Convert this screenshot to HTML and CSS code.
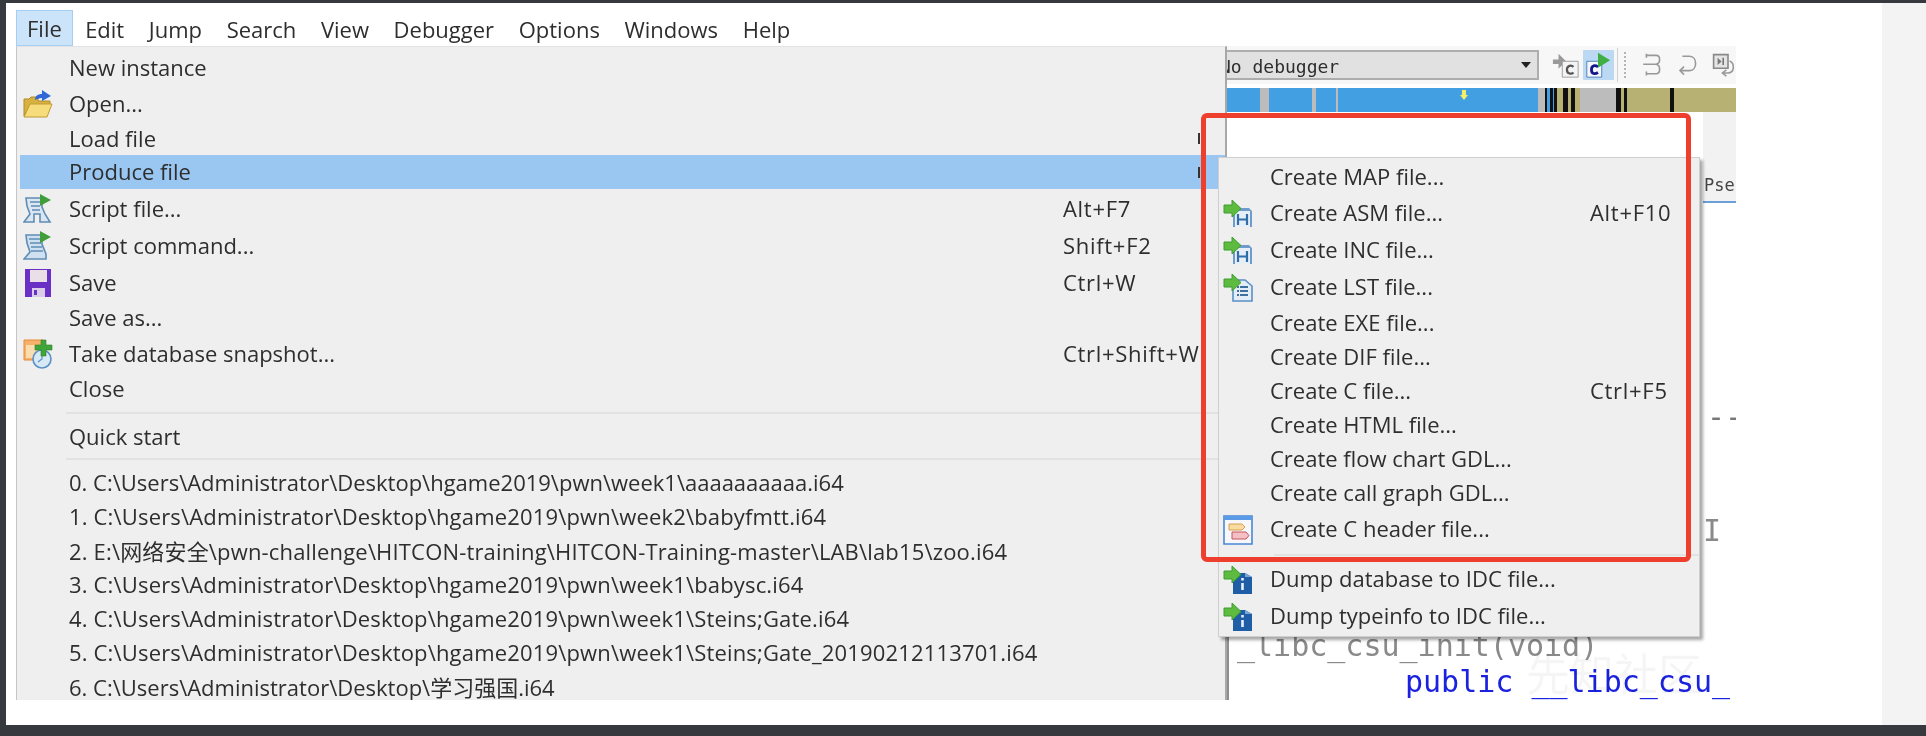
FILE: index.html
```html
<!DOCTYPE html>
<html lang="en">
  <head>
    <meta charset="UTF-8" />
    <title>IDA File menu</title>
    <link rel="stylesheet" href="styles.css">
  </head>
  <body>
    <svg class="defs" width="0" height="0">
      <symbol id="i-arrow" viewBox="0 0 30 30">
        <path d="M9 1 L18 9.5 L9 18 V14 H1 V6 H9 Z" fill="#5dbb3f" stroke="#3f9c33" stroke-width="1"/>
      </symbol>
      <symbol id="i-open" viewBox="0 0 30 30">
        <path d="M1 27 V10 H6 L8 8 H15 V12 H27 V16 H7 Z" fill="#d8b13f" stroke="#b08a2a"/>
        <path d="M1 28 L7 15 H29 L24 28 Z" fill="#f6dc7a" stroke="#c19a32"/>
        <path d="M12 11 C12 7 15 5 19 5 V1 L28 7 L19 12 V9 C16 9 14 10 12 11 Z" fill="#2f67d8"/>
      </symbol>
      <symbol id="i-script-file" viewBox="0 0 30 30">
        <path d="M3 4 H19 V13 L22 20 L27 28 H17 V20 H11 V28 H1 L7 20 L4 12 Z" fill="#dbe6f2" stroke="#5f8db5" stroke-width="1.6"/>
        <path d="M7 8 H17 M8 12 H17 M9 16 H17" stroke="#5f8db5" stroke-width="1.4"/>
        <path d="M17 0 L28 6 L17 12 Z" fill="#3f9e3a"/>
      </symbol>
      <symbol id="i-script-cmd" viewBox="0 0 30 30">
        <path d="M3 4 H19 V13 L23 23 V28 H1 L7 21 L4 12 Z" fill="#cfe0f0" stroke="#5f8db5" stroke-width="1.6"/>
        <path d="M6 8 H17 M7 12 H18 M8 16 H19 M8 20 H20" stroke="#5f8db5" stroke-width="1.4"/>
        <path d="M17 0 L28 6 L17 12 Z" fill="#3f9e3a"/>
      </symbol>
      <symbol id="i-save" viewBox="0 0 30 30">
        <path d="M2 1 H28 V29 H2 Z" fill="#6a2fc4"/>
        <path d="M7 2 H24 V14 H7 Z" fill="#eadfe6"/>
        <path d="M9 20 H22 V29 H9 Z" fill="#d9cdea"/>
        <path d="M11 22 H14 V27 H11 Z" fill="#6a2fc4"/>
      </symbol>
      <symbol id="i-snapshot" viewBox="0 0 30 30">
        <path d="M1 1 H20 V21 H1 Z" fill="#f6b26b" stroke="#e58a3a"/>
        <path d="M3 6 H18 V19 H3 Z" fill="#fbdcae"/>
        <circle cx="19" cy="20" r="9" fill="#d8e9f6" stroke="#5a90c4" stroke-width="1.6"/>
        <path d="M19 15 V20 L15 23" stroke="#5a90c4" stroke-width="1.2" fill="none"/>
        <path d="M18 1 H23 V6 H29 V11 H23 V17 H18 V11 H12 V6 H18 Z" fill="#3fa53a" stroke="#2c7f2a" stroke-width=".6"/>
      </symbol>
      <symbol id="i-asm" viewBox="0 0 30 30">
        <path d="M10 9 H26 L29 12 V28 H27 V12 H12 V28 H10 Z" fill="#6f9ccd"/>
        <path d="M12 12 H27 V28 H12 Z" fill="#e6eef7"/>
        <path d="M15 15 V26 M24 15 V26 M15 20.5 H24" stroke="#2f6ea8" stroke-width="2.2" fill="none"/>
        <use href="#i-arrow" width="30" height="30"/>
      </symbol>
      <symbol id="i-lst" viewBox="0 0 30 30">
        <path d="M10 7 H22 L29 13 V28 H10 Z" fill="#e3edf7" stroke="#5b8fc6" stroke-width="1.6"/>
        <path d="M14 14 H25 M14 18 H25 M14 22 H25" stroke="#3f6f9f" stroke-width="1.8" stroke-dasharray="2 1 8 0"/>
        <use href="#i-arrow" width="30" height="30"/>
      </symbol>
      <symbol id="i-header" viewBox="0 0 30 30">
        <path d="M1 1 H29 V29 H1 Z" fill="#f5f7fb" stroke="#4a86d8" stroke-width="1.6"/>
        <path d="M1 1 H29 V5 H1 Z" fill="#5b9ae6"/>
        <path d="M6 9 H19 L22 12 L19 15 H6 Z" fill="#f7dba0" stroke="#d8a050"/>
        <path d="M9 17 H23 L26 20.5 L23 24 H9 Z" fill="#f3c0c6" stroke="#c8545f"/>
      </symbol>
      <symbol id="i-dump" viewBox="0 0 30 30">
        <path d="M10 8 H22 L29 12 V29 H10 Z" fill="#1f5ea6"/>
        <path d="M22 8 L29 12 H22 Z" fill="#7aa6d4"/>
        <path d="M19.5 13 V15.5 M19.5 18 V25" stroke="#e8f0fa" stroke-width="2.6"/>
        <use href="#i-arrow" width="30" height="30"/>
      </symbol>
    </svg>

    <div class="screen">
      <div class="shot">
        <div class="menubar">
          <span class="menubar-item menubar-active">File</span>
          <span class="menubar-item">Edit</span>
          <span class="menubar-item">Jump</span>
          <span class="menubar-item">Search</span>
          <span class="menubar-item">View</span>
          <span class="menubar-item">Debugger</span>
          <span class="menubar-item">Options</span>
          <span class="menubar-item">Windows</span>
          <span class="menubar-item">Help</span>
        </div>

        <div class="workspace">
          <div class="menu">
            <div class="item"><span class="slot"></span><span class="label">New instance</span></div>
            <div class="item item-tall"><span class="slot"><svg class="icon"><use href="#i-open"/></svg></span><span class="label">Open...</span></div>
            <div class="item item-short"><span class="slot"></span><span class="label">Load file</span><span class="tick"></span></div>
            <div class="item item-current"><span class="slot"></span><span class="label">Produce file</span><span class="tick"></span></div>
            <div class="item item-tall"><span class="slot"><svg class="icon"><use href="#i-script-file"/></svg></span><span class="label">Script file...</span><span class="keys">Alt+F7</span></div>
            <div class="item item-tall"><span class="slot"><svg class="icon"><use href="#i-script-cmd"/></svg></span><span class="label">Script command...</span><span class="keys">Shift+F2</span></div>
            <div class="item item-tall"><span class="slot"><svg class="icon"><use href="#i-save"/></svg></span><span class="label">Save</span><span class="keys">Ctrl+W</span></div>
            <div class="item"><span class="slot"></span><span class="label">Save as...</span></div>
            <div class="item item-tall"><span class="slot"><svg class="icon"><use href="#i-snapshot"/></svg></span><span class="label">Take database snapshot...</span><span class="keys">Ctrl+Shift+W</span></div>
            <div class="item"><span class="slot"></span><span class="label">Close</span></div>
            <div class="sep sep-a"></div>
            <div class="item"><span class="slot"></span><span class="label">Quick start</span></div>
            <div class="sep sep-b"></div>
            <div class="item"><span class="slot"></span><span class="label">0. C:\Users\Administrator\Desktop\hgame2019\pwn\week1\aaaaaaaaaa.i64</span></div>
            <div class="item"><span class="slot"></span><span class="label label-spaced">1. C:\Users\Administrator\Desktop\hgame2019\pwn\week2\babyfmtt.i64</span></div>
            <div class="item"><span class="slot"></span><span class="label label-spaced">2. E:\网络安全\pwn-challenge\HITCON-training\HITCON-Training-master\LAB\lab15\zoo.i64</span></div>
            <div class="item"><span class="slot"></span><span class="label label-spaced">3. C:\Users\Administrator\Desktop\hgame2019\pwn\week1\babysc.i64</span></div>
            <div class="item"><span class="slot"></span><span class="label label-spaced">4. C:\Users\Administrator\Desktop\hgame2019\pwn\week1\Steins;Gate.i64</span></div>
            <div class="item"><span class="slot"></span><span class="label label-spaced">5. C:\Users\Administrator\Desktop\hgame2019\pwn\week1\Steins;Gate_20190212113701.i64</span></div>
            <div class="item"><span class="slot"></span><span class="label">6. C:\Users\Administrator\Desktop\学习强国.i64</span></div>
          </div>

          <div class="code">
            <div class="toolbar">
              <div class="combo"><span class="combo-text">No debugger</span><span class="combo-arrow"></span></div>
              <svg class="tool tool-c" viewBox="0 0 30 30">
                <path d="M1 9 H7 V3 L15 11 L7 19 V14 H1 Z" fill="#9a9a9a"/>
                <path d="M11 11 H28 V28 H11 Z" fill="#f4f4f4" stroke="#9a9a9a"/>
                <path d="M23 17 C21 15 16 15 16 20 C16 25 21 25 23 23" fill="none" stroke="#555" stroke-width="2.4"/>
              </svg>
              <span class="tool-on">
                <svg class="tool" viewBox="0 0 30 30">
                  <path d="M3 11 H19 V28 H3 Z" fill="#f4f8fc" stroke="#4a7db5"/>
                  <path d="M15 17 C12 15 8 15 8 20 C8 25 12 25 15 23" fill="none" stroke="#14148c" stroke-width="3"/>
                  <path d="M15 2 L28 10 L15 18 Z" fill="#3fae45"/>
                </svg>
              </span>
              <span class="tool-sep"></span>
              <span class="tool-grip"></span>
              <svg class="tool tool-plain" viewBox="0 0 30 30">
                <path d="M8 3 H20 C26 3 26 13 20 14 C26 15 26 26 20 26 H8 M4 14 H20 M8 1 V6 M8 23 V28" fill="none" stroke="#999" stroke-width="2"/>
              </svg>
              <svg class="tool tool-plain" viewBox="0 0 30 30">
                <path d="M8 4 H17 C27 4 27 22 17 22 H6 M10 17 L5 22 L10 27" fill="none" stroke="#999" stroke-width="2"/>
              </svg>
              <svg class="tool tool-plain" viewBox="0 0 30 30">
                <path d="M2 2 H20 V19 H2 Z" fill="#e4e4e4" stroke="#888" stroke-width="2"/>
                <path d="M7 6 L12 10.5 L7 15 Z M13 6 H15 V15 H13 Z" fill="#777"/>
                <path d="M22 10 C29 13 28 25 20 25 H14 M18 21 L13 25 L18 29" fill="none" stroke="#999" stroke-width="2"/>
              </svg>
            </div>
            <div class="navstrip"><span class="nav-mark"></span></div>
            <div class="tab-row"><span class="tab">Pse</span></div>
            <div class="code-body">
              <div class="code-line code-dash">--</div>
              <div class="code-line code-gray code-bar">I</div>
              <div class="code-line code-gray code-init">_libc_csu_init(void)</div>
              <div class="code-line code-blue">public __libc_csu_</div>
            </div>
          </div>
        </div>

        <div class="submenu">
          <div class="item"><span class="slot sub-slot"></span><span class="label sub-label">Create MAP file...</span></div>
          <div class="item item-tall"><span class="slot sub-slot"><svg class="icon"><use href="#i-asm"/></svg></span><span class="label sub-label">Create ASM file...</span><span class="keys sub-keys">Alt+F10</span></div>
          <div class="item item-tall"><span class="slot sub-slot"><svg class="icon"><use href="#i-asm"/></svg></span><span class="label sub-label">Create INC file...</span></div>
          <div class="item item-tall item-gap"><span class="slot sub-slot"><svg class="icon"><use href="#i-lst"/></svg></span><span class="label sub-label">Create LST file...</span></div>
          <div class="item"><span class="slot sub-slot"></span><span class="label sub-label">Create EXE file...</span></div>
          <div class="item"><span class="slot sub-slot"></span><span class="label sub-label">Create DIF file...</span></div>
          <div class="item"><span class="slot sub-slot"></span><span class="label sub-label">Create C file...</span><span class="keys sub-keys">Ctrl+F5</span></div>
          <div class="item"><span class="slot sub-slot"></span><span class="label sub-label">Create HTML file...</span></div>
          <div class="item"><span class="slot sub-slot"></span><span class="label sub-label">Create flow chart GDL...</span></div>
          <div class="item"><span class="slot sub-slot"></span><span class="label sub-label">Create call graph GDL...</span></div>
          <div class="item item-tall"><span class="slot sub-slot"><svg class="icon"><use href="#i-header"/></svg></span><span class="label sub-label">Create C header file...</span></div>
          <div class="sep sep-sub"></div>
          <div class="item item-tall"><span class="slot sub-slot"><svg class="icon"><use href="#i-dump"/></svg></span><span class="label sub-label">Dump database to IDC file...</span></div>
          <div class="item item-tall"><span class="slot sub-slot"><svg class="icon"><use href="#i-dump"/></svg></span><span class="label sub-label">Dump typeinfo to IDC file...</span></div>
        </div>

        <div class="watermark">先知社区</div>
        <div class="redbox"></div>
      </div>
      <div class="gutter"></div>
    </div>
  </body>
</html>
```

FILE: styles.css
```css
body {
  margin: 0;
  height: 736px;
  overflow: hidden;
  background-color: #36393d;
  font-family: "Open Sans", "Noto Sans CJK SC", sans-serif;
  color: #2e2e2e;
}
.defs {
  position: absolute;
}
.screen {
  display: flex;
  justify-content: space-between;
  height: 722px;
  margin: 3px 0 0 6px;
  background: white;
}
.shot {
  position: relative;
  width: 1720px;
  height: 690px;
  margin: 7px 0 0 10px;
  filter: blur(0.5px);
}
.gutter {
  width: 44px;
  background: #f3f3f3;
}

/* menu bar */
.menubar {
  display: flex;
  height: 36px;
  font-size: 22px;
}
.menubar-item {
  display: flex;
  align-items: center;
  padding: 1px 12.3px 0;
}
.menubar-active {
  background: #cce4f9;
  border: 1px solid #a4cff3;
  padding: 0 10px;
}

/* main layout under the menu bar */
.workspace {
  display: flex;
  height: 654px;
}
.menu {
  flex: none;
  width: 1211px;
  box-sizing: border-box;
  padding: 4px 0 0 3px;
  background: #efefef;
  border-left: 1px solid #c6c6c6;
  border-top: 1px solid #e2e2e2;
  border-right: 2px solid #a8a8a8;
  overflow: hidden;
}
.item {
  display: flex;
  align-items: center;
  height: 34px;
  font-size: 22px;
  white-space: nowrap;
}
.item-tall {
  height: 37px;
}
.item-short {
  height: 33px;
}
.item-gap {
  margin-bottom: 1px;
}
.item-current {
  background: #99c7f1;
  margin-bottom: 1px;
}
.slot {
  flex: none;
  width: 46px;
  padding-left: 3px;
  display: flex;
}
.icon {
  width: 30px;
  height: 30px;
}
.label {
  flex: none;
  width: 994px;
  padding-bottom: 2px;
}
.label-spaced {
  letter-spacing: 0.17px;
}
.keys {
  flex: none;
  padding-bottom: 2px;
  letter-spacing: 0.7px;
}
.tick {
  width: 2px;
  height: 11px;
  margin-left: auto;
  margin-right: 25px;
  background: #333;
}
.sep {
  height: 2px;
  margin-left: 46px;
  background: #e2e2e2;
}
.sep-a {
  margin-top: 6px;
  margin-bottom: 6px;
}
.sep-b {
  margin-top: 4px;
  margin-bottom: 6px;
}

/* what shows behind the menus */
.code {
  flex: 1;
  min-width: 0;
  overflow: hidden;
  background: white;
}
.toolbar {
  display: flex;
  align-items: center;
  height: 38px;
  background: #f7f7f7;
}
.combo {
  display: flex;
  align-items: center;
  justify-content: space-between;
  width: 319px;
  height: 30px;
  box-sizing: border-box;
  padding-right: 6px;
  background: #e1e1e1;
  border: 2px solid #adadad;
  border-left: 0;
  font-family: "DejaVu Sans Mono", monospace;
  font-size: 18px;
  overflow: hidden;
}
.combo-text {
  margin-left: -7px;
  padding-top: 2px;
}
.combo-arrow {
  border-left: 5px solid transparent;
  border-right: 5px solid transparent;
  border-top: 6px solid #222;
}
.tool {
  flex: none;
  width: 28px;
  height: 28px;
}
.tool-c {
  margin-left: 13px;
}
.tool-on {
  display: flex;
  align-items: center;
  justify-content: center;
  width: 32px;
  height: 30px;
  margin-left: 3px;
  background: #bcd9f4;
  border-radius: 1px;
}
.tool-sep {
  width: 1px;
  height: 34px;
  margin-left: 3px;
  background: #d2d2d2;
}
.tool-grip {
  width: 2px;
  height: 26px;
  margin-left: 6px;
  border-left: 2px dotted #b5b5b5;
}
.tool-plain {
  width: 24px;
  height: 24px;
  margin-left: 12px;
}
.navstrip {
  position: relative;
  height: 24px;
  margin-top: 4px;
  background: linear-gradient(90deg,
    #42a0e2 0 33px, #bcbcbc 33px 42px, #42a0e2 42px 85px, #bcbcbc 85px 89px,
    #42a0e2 89px 109px, #bcbcbc 109px 111px, #42a0e2 111px 311px, #bcbcbc 311px 318px,
    #111 318px 320px, #42a0e2 320px 323px, #111 323px 326px, #42a0e2 326px 327px,
    #111 327px 330px, #b7b274 330px 336px, #111 336px 341px, #b7b274 341px 344px,
    #111 344px 348px, #b7b274 348px 353px, #bcbcbc 353px 389px, #111 389px 394px,
    #b7b274 394px 397px, #111 397px 400px, #b7b274 400px 443px, #111 443px 447px,
    #b7b274 447px);
}
.nav-mark {
  position: absolute;
  left: 235px;
  top: 2px;
  width: 4px;
  height: 5px;
  background: #f4ee6a;
}
.nav-mark::after {
  content: "";
  position: absolute;
  left: -2px;
  top: 5px;
  border-left: 4px solid transparent;
  border-right: 4px solid transparent;
  border-top: 5px solid #f4ee6a;
}
.tab-row {
  display: flex;
  justify-content: flex-end;
  height: 91px;
  border-bottom: 2px solid #6a9fd8;
  margin-left: 476px;
  box-sizing: border-box;
  padding-top: 63px;
  background: #f2f2f2;
  overflow: hidden;
  font-family: "DejaVu Sans Mono", monospace;
  font-size: 17px;
  color: #444;
}
.tab {
  flex: none;
  width: 32px;
  overflow: hidden;
}
.code-body {
  height: 497px;
  overflow: hidden;
  padding-left: 8px;
  border-left: 2px solid #8e8e8e;
  font-family: "DejaVu Sans Mono", monospace;
  font-size: 30px;
  line-height: 36px;
  white-space: nowrap;
}
.code-line {
  height: 36px;
}
.code-dash {
  margin-top: 196px;
  margin-left: 470px;
  color: #777;
}
.code-bar {
  margin-top: 78px;
  margin-left: 466px;
}
.code-init {
  margin-top: 79px;
}
.code-gray {
  color: #8a8a8a;
}
.code-blue {
  margin-top: 0;
  margin-left: 168px;
  color: #1a22e0;
}

/* the open submenu */
.submenu {
  position: absolute;
  left: 1202px;
  top: 147px;
  width: 482px;
  height: 480px;
  box-sizing: border-box;
  padding-top: 3px;
  background: #efefef;
  border: 1px solid #cfcfcf;
  box-shadow: 3px 3px 3px rgba(0, 0, 0, 0.35);
}
.sub-slot {
  width: 47px;
  padding-left: 4px;
}
.sub-label {
  width: 320px;
  padding-bottom: 4px;
}
.sub-keys {
  padding-bottom: 4px;
}
.sep-sub {
  margin: 6px 0 5px 55px;
}
.watermark {
  position: absolute;
  left: 1510px;
  top: 630px;
  font-size: 44px;
  color: rgba(0, 0, 0, 0.04);
}
.redbox {
  position: absolute;
  left: 1185px;
  top: 103px;
  width: 490px;
  height: 449px;
  box-sizing: border-box;
  border: 5px solid #ee3e2d;
  border-radius: 6px;
}
```
